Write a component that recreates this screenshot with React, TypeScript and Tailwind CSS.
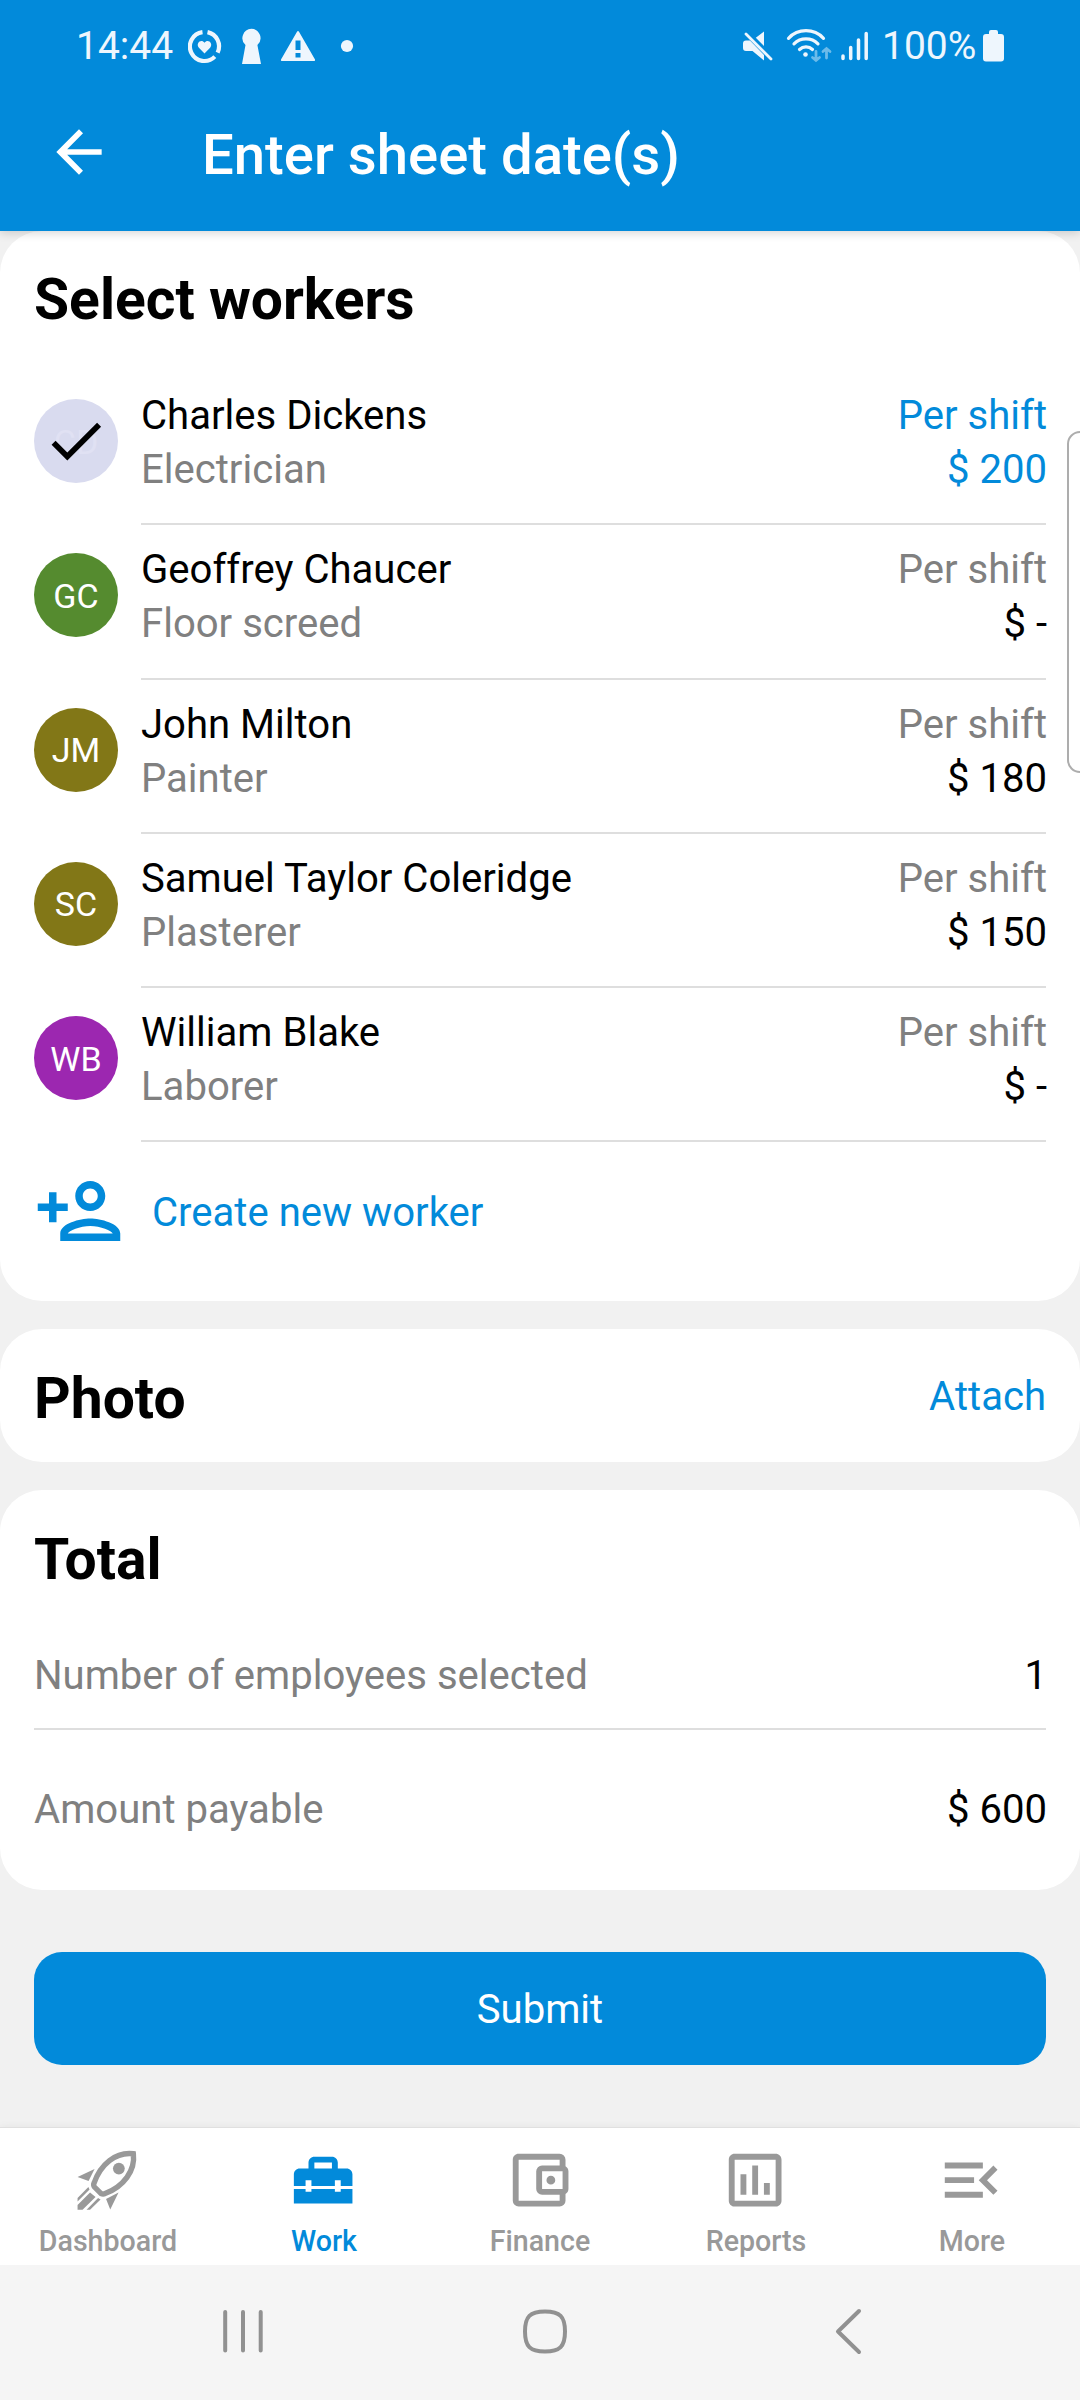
import type { ReactNode } from "react";
import { MdArrowBack, MdCheck } from "react-icons/md";

const workers = [
    { initials: "CD", name: "Charles Dickens", job: "Electrician", rate: "$ 200", color: "bg-[#d9dbef]", selected: true },
    { initials: "GC", name: "Geoffrey Chaucer", job: "Floor screed", rate: "$ -", color: "bg-[#558b2f]" },
    { initials: "JM", name: "John Milton", job: "Painter", rate: "$ 180", color: "bg-[#827717]" },
    { initials: "SC", name: "Samuel Taylor Coleridge", job: "Plasterer", rate: "$ 150", color: "bg-[#827717]" },
    { initials: "WB", name: "William Blake", job: "Laborer", rate: "$ -", color: "bg-[#9c27b0]" },
];

function StatusBar() {
    return (
        <div className="flex h-[92px] items-center justify-between px-[76px] text-[39px] text-[#eef6fd]">
            <div className="flex items-center">
                <span className="w-[112px] whitespace-nowrap">14:44</span>
                <svg className="h-[40px] w-[172px]" viewBox="188 26 172 40" fill="currentColor">
                    <g fill="none" stroke="currentColor" strokeWidth="4.2">
                        <path d="M202.5 32.1A14.5 14.5 0 1 0 214.8 56.6" />
                        <path d="M207.5 32.1A14.5 14.5 0 0 1 217.6 52.6" />
                    </g>
                    <path d="M204.5 53.5l-5.6-5.7c-3.6-4.3 2.3-9.4 5.6-5 3.3-4.4 9.2.7 5.6 5z" />
                    <path d="M251.4 28.8a9.3 9.3 0 0 1 6 16.2L261 64h-19l3.5-19a9.3 9.3 0 0 1 5.9-16.2z" />
                    <path fillRule="evenodd" d="M298 31q.6 0 1 .8l16 27.7q.6 1.5-1 1.5h-32q-1.6 0-1-1.5l16-27.7q.4-.8 1-.8zM295.5 40.5v9.5h5v-9.5zM295.5 53v4.5h5v-4.5z" />
                    <circle cx="347" cy="46" r="6.1" />
                </svg>
            </div>
            <div className="flex items-center">
                <svg className="h-[40px] w-[142px]" viewBox="740 26 142 40" fill="currentColor">
                    <path d="M764 31.5v14.5l-8.2-8.3zM746 40.5h4l14 14.5v5.5l-11.5-9.5h-6.5q-3 0-3-3v-4.5q0-3 3-3z" />
                    <path d="M746 34L771 59" stroke="currentColor" strokeWidth="2.8" strokeLinecap="round" />
                    <path d="M788.5 38.3a24 24 0 0 1 35 0M794 43.8a17 17 0 0 1 24 0M799.5 49.5a9.5 9.5 0 0 1 13 0" fill="none" stroke="currentColor" strokeWidth="3.2" strokeLinecap="round" />
                    <circle cx="805.5" cy="54.5" r="2.3" />
                    <path d="M816 51.5v9M812.5 57.5l3.5 3 3.5-3M826.5 58v-9M823 51.5l3.5-3 3.5 3" fill="none" stroke="currentColor" strokeWidth="2.8" strokeLinecap="round" opacity=".45" />
                    <path d="M843 56v2.5M850.7 47.5v11M858.5 40v18.5M866.2 33.5v25" stroke="currentColor" strokeWidth="3.5" strokeLinecap="round" />
                </svg>
                <span className="w-[101px] whitespace-nowrap">100%</span>
                <svg className="h-[32px] w-[21px]" viewBox="0 0 21 32" fill="currentColor">
                    <path d="M6 2q0-2 2-2h5q2 0 2 2v2h3q3 0 3 3v21.5q0 3-3 3H3q-3 0-3-3V7q0-3 3-3h3z" />
                </svg>
            </div>
        </div>
    );
}

function Header() {
    return (
        <header className="relative z-10 h-[231px] bg-[#028ada] shadow-[0_2px_9px_rgba(0,0,0,0.17)]">
            <StatusBar />
            <div className="flex h-[120px] items-center pl-[45px] text-white">
                <MdArrowBack className="size-[68px]" />
                <h1 className="pl-[89px] pt-1.5 text-[56.25px] font-medium leading-none">Enter sheet date(s)</h1>
            </div>
        </header>
    );
}

function Worker({ worker }: { worker: (typeof workers)[number] }) {
    return (
        <li className="flex h-[154.25px]">
            <div className={`relative mt-[28px] flex size-[84px] shrink-0 items-center justify-center rounded-full text-[34px] ${worker.color} ${worker.selected ? "text-[#e0e1f3]" : "text-white"}`}>
                <span className="pt-0.5">{worker.initials}</span>
                {worker.selected && <MdCheck className="absolute size-[67.5px] text-black" />}
            </div>
            <div className="ml-[23px] flex flex-1 justify-between border-b-2 border-[#dedede] pt-[18px] leading-[54px]">
                <div>
                    <p>{worker.name}</p>
                    <p className="text-[#808080]">{worker.job}</p>
                </div>
                <div className={`-mr-px text-right ${worker.selected ? "text-[#028ada]" : ""}`}>
                    <p className={worker.selected ? "" : "text-[#808080]"}>Per shift</p>
                    <p>{worker.rate}</p>
                </div>
            </div>
        </li>
    );
}

function Tab({ label, active, children }: { label: string; active?: boolean; children: ReactNode }) {
    return (
        <a href="#" className={`flex flex-1 flex-col items-center pt-[17px] text-[28.6px] font-medium leading-[34px] ${active ? "text-[#028ada]" : "text-[#999999]"}`}>
            <svg className="mr-px size-[70.3px]" viewBox="0 0 24 24" fill="currentColor">{children}</svg>
            <span className="mt-[9px]">{label}</span>
        </a>
    );
}

function BottomTabs() {
    return (
        <nav className="flex h-[138px] border-t border-[#e0e0e0] bg-white shadow-[0_0_8px_rgba(0,0,0,0.06)]">
            <Tab label="Dashboard">
                <g transform="translate(1.9 1.9) scale(.3413)">
                    <path d="M55.8 3.2C38 1 23 14 16.5 32.5Q15.5 34.5 17 36.5L23.500 43Q25.5 44 27.5 43C46 36 58 20 55.8 3.2Z" fill="none" stroke="currentColor" strokeWidth="5.4" />
                    <circle cx="41.3" cy="18" r="5.9" />
                    <path d="M0 26.5L17 18.5 11 30.5zM41 42L32.7 59 28.5 48.5zM12.5 42L18 46.5 5 59.3H0V54.5zM10.8 36.5L12 39 0 51V47.5zM20.5 47.5L23 49 12.5 59.3H9z" />
                </g>
            </Tab>
            <Tab label="Work" active>
                <path d="M18 16h-2v-1H8v1H6v-1H2v5h20v-5h-4zM20 8h-3V6c0-1.1-.9-2-2-2H9c-1.1 0-2 .9-2 2v2H4c-1.1 0-2 .9-2 2v4h4v-2h2v2h8v-2h2v2h4v-4c0-1.1-.9-2-2-2m-5 0H9V6h6z" />
            </Tab>
            <Tab label="Finance">
                <path d="M5 3c-1.11 0-2 .9-2 2v14a2 2 0 0 0 2 2h14a2 2 0 0 0 2-2v-2.28c.59-.35 1-.98 1-1.72V9c0-.74-.41-1.37-1-1.72V5a2 2 0 0 0-2-2zm0 2h14v2h-6a2 2 0 0 0-2 2v6a2 2 0 0 0 2 2h6v2H5zm8 4h7v6h-7zm3 1.5a1.5 1.5 0 0 0 0 3 1.5 1.5 0 0 0 0-3" />
            </Tab>
            <Tab label="Reports">
                <path d="M19 3H5c-1.1 0-2 .9-2 2v14c0 1.1.9 2 2 2h14c1.1 0 2-.9 2-2V5c0-1.1-.9-2-2-2m0 16H5V5h14zM7 10h2v7H7zM11 7h2v10h-2zM15 13h2v4h-2z" />
            </Tab>
            <Tab label="More">
                <path d="M3 18h13v-2H3zM3 6v2h13V6zM3 13h10v-2H3zM21 15.59L17.42 12 21 8.41 19.59 7l-5 5 5 5z" />
            </Tab>
        </nav>
    );
}

export default function App() {
    return (
        <div className="relative flex h-[2400px] w-[1080px] flex-col overflow-hidden bg-[#f1f1f1] font-['Roboto',sans-serif] text-[40.1px] text-black">
            <Header />

            <main className="flex flex-1 flex-col">
                <section className="h-[1070px] rounded-[42px] bg-white px-[34px]">
                    <h2 className="h-[140px] pt-[36px] text-[57px] font-bold leading-[66px]">Select workers</h2>
                    <ul>
                        {workers.map((worker) => (
                            <Worker key={worker.initials} worker={worker} />
                        ))}
                    </ul>
                    <a href="#" className="flex h-[138px] items-center text-[#028ada]">
                        <svg className="size-[90px]" viewBox="0 0 24 24" fill="currentColor">
                            <path d="M15 12c2.21 0 4-1.79 4-4s-1.79-4-4-4-4 1.79-4 4 1.79 4 4 4m0-6c1.1 0 2 .9 2 2s-.9 2-2 2-2-.9-2-2 .9-2 2-2m0 8c-2.67 0-8 1.34-8 4v2h16v-2c0-2.66-5.33-4-8-4m-6 4c.22-.72 3.31-2 6-2 2.7 0 5.8 1.29 6 2zM6 15v-3h3v-2H6V7H4v3H1v2h3v3z" />
                        </svg>
                        <span className="pl-[28px] pt-1">Create new worker</span>
                    </a>
                </section>

                <section className="mt-[28px] flex h-[133px] items-center justify-between rounded-[42px] bg-white px-[34px]">
                    <h2 className="pt-1.5 text-[57px] font-bold leading-none">Photo</h2>
                    <a href="#" className="pt-1 text-[#028ada]">Attach</a>
                </section>

                <section className="mt-[28px] h-[400px] rounded-[42px] bg-white px-[34px]">
                    <h2 className="h-[131px] pt-[37px] text-[57px] font-bold leading-[66px]">Total</h2>
                    <div className="flex h-[109px] items-center justify-between border-b-2 border-[#dedede] pt-1">
                        <p className="text-[#808080]">Number of employees selected</p>
                        <p className="-mr-px">1</p>
                    </div>
                    <div className="flex h-[160px] items-center justify-between">
                        <p className="text-[#808080]">Amount payable</p>
                        <p className="-mr-px">$ 600</p>
                    </div>
                </section>

                <button className="mx-[34px] mt-[62px] h-[113px] rounded-[28px] bg-[#028ada] pt-1 text-white">Submit</button>
            </main>

            <BottomTabs />

            <footer className="flex h-[135px] items-center bg-[#f5f5f5]">
                <svg className="h-[60px] w-[1080px]" viewBox="0 0 1080 60" fill="none" stroke="#919191" strokeWidth="4" strokeLinecap="round" strokeLinejoin="round">
                    <path d="M225.2 9v38.5M243 9v38.5M260.7 9v38.5" />
                    <path d="M545 8.5C560 8.5 565 13.5 565 28.5S560 48.5 545 48.5 525 43.5 525 28.5 530 8.5 545 8.5Z" />
                    <path d="M859 8L838 28.5 859 49" />
                </svg>
            </footer>

            {/* edge panel handle, hangs over the list */}
            <div className="absolute right-[-14px] top-[431px] z-20 h-[342px] w-[27px] rounded-[13px] border-2 border-[#adadad] bg-white/90"></div>
        </div>
    );
}
